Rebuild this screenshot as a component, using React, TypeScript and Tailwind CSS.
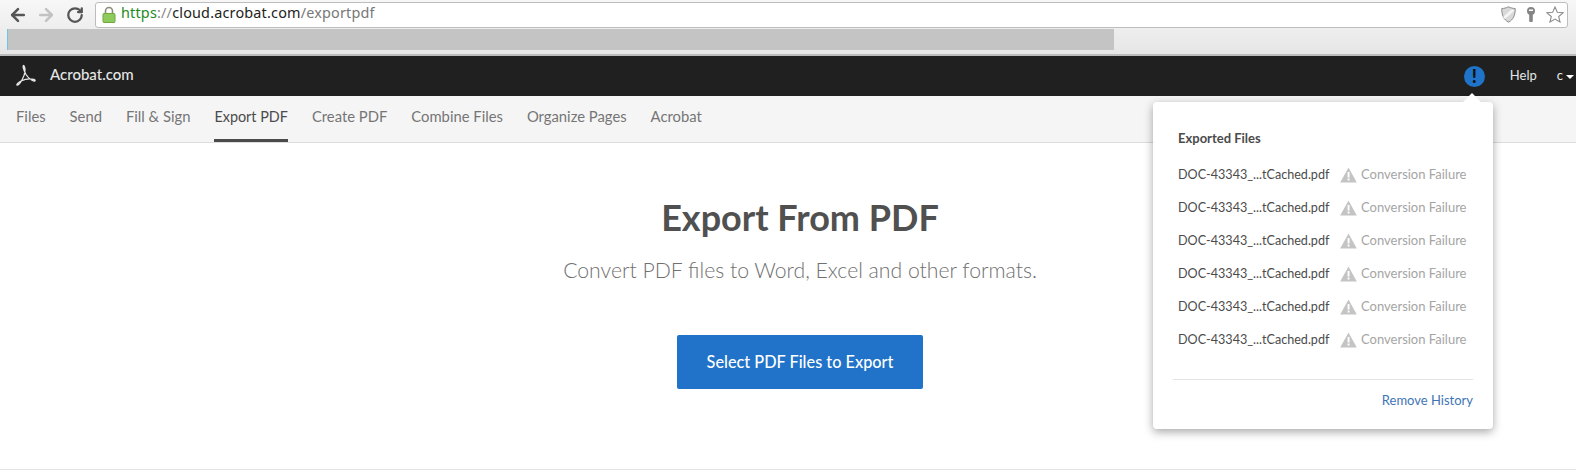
import { ArrowLeft, ArrowRight, RotateCw } from "lucide-react";

const tabs = ["Files", "Send", "Fill & Sign", "Export PDF", "Create PDF", "Combine Files", "Organize Pages", "Acrobat"];
const rows = [0, 1, 2, 3, 4, 5];

function AcrobatLogo() {
  return (
    <svg width="22" height="22" viewBox="0 0 22 22" fill="none" stroke="#e8e8e8" strokeWidth="1.3">
      <path d="M8.5 1.5c-1 .5 .2 5 2.5 9 2 3 5 6 8 6.5 1.5 .2 1.5-1.2 0-1.6-3-.8-9-.3-13 1.6-3 1.500-4.500 3.500-4 4 .8 .6 3-1.500 5-5 1.500-2.500 3-6 3-10 0-2.500-1-4.700-1.500-4.500z" />
    </svg>
  );
}

function WarningIcon() {
  return (
    <svg width="17" height="16" viewBox="0 0 17 16">
      <path d="M8.5 0.500 L16.800 15.500 H0.200 Z" fill="#c4c4c4" />
      <rect x="7.600" y="5" width="1.900" height="5.500" fill="#fff" />
      <rect x="7.600" y="11.500" width="1.900" height="2" fill="#fff" />
    </svg>
  );
}

function AddressBar() {
  return (
    <div className="flex h-[26px] flex-1 items-center rounded-[3px] border border-[#bdbdbd] bg-white pl-[6px] pr-[3px]">
      <svg width="14" height="17" viewBox="0 0 14 17" className="mr-[5px]">
        <path d="M3.500 8V5a3.500 3.500 0 0 1 7 0v3" fill="none" stroke="#8a8a7a" strokeWidth="1.600" />
        <rect x="1" y="7.500" width="12" height="9" rx="1" fill="#8ecb5c" stroke="#6da83f" />
      </svg>
      <span className="-mt-[2px] font-['Noto_Sans',sans-serif] text-[14.4px] leading-none tracking-[0.19px]">
        <span className="text-[#1d8a1d]">https</span>
        <span className="text-[#8a8a8a]">://</span>
        <span className="text-[#222]">cloud.acrobat.com</span>
        <span className="text-[#777]">/exportpdf</span>
      </span>
      <div className="ml-auto flex items-center gap-[10px]">
        <svg width="15" height="17" viewBox="0 0 15 17">
          <path d="M7.500 .800 C10 2 12 2.500 14.200 2.500 C14.500 9 12 14 7.500 16.200 C3 14 .5 9 .8 2.500 C3 2.500 5 2 7.500 .800 Z" fill="#d9d9d9" stroke="#8c8c8c" />
          <path d="M3 12 L12 4" stroke="#f5f5f5" strokeWidth="3" />
        </svg>
        <svg width="10" height="16" viewBox="0 0 10 16" fill="#858585">
          <circle cx="5" cy="4" r="4" />
          <rect x="3.200" y="5" width="3.600" height="10" rx="1" />
          <rect x="3" y="2.500" width="4" height="1.500" fill="#fff" />
        </svg>
        <svg width="18" height="17" viewBox="0 0 18 17" fill="#fff" stroke="#8d8d8d" strokeWidth="1.100">
          <path d="M9 1 L11.300 6.200 L17 6.800 L12.700 10.500 L14 16 L9 13.100 L4 16 L5.300 10.500 L1 6.800 L6.700 6.200 Z" />
        </svg>
      </div>
    </div>
  );
}

function ExportPopover() {
  return (
    <div className="absolute right-[83px] top-[102px] h-[327px] w-[340px] rounded-[4px] bg-white px-[20px] shadow-[0_3px_10px_rgba(0,0,0,0.35)]">
      <div className="absolute -top-[6px] right-[14px] size-[14px] rotate-45 bg-white" />
      <h3 className="pl-[5px] pt-[27px] text-[13px] font-bold leading-[18px] text-[#4b4b4b]">Exported Files</h3>
      <ul className="mt-[11px] flex flex-col">
        {rows.map((i) => (
          <li key={i} className="flex h-[33px] items-center pl-[5px] text-[13px]">
            <span className="mt-[2px] w-[162px] text-[12.6px] text-[#4b4b4b]">DOC-43343_...tCached.pdf</span>
            <WarningIcon />
            <span className="ml-[4px] text-[#a5a5a5]">Conversion Failure</span>
          </li>
        ))}
      </ul>
      <div className="mt-[23px] border-t border-[#e4e4e4] pt-[11px] text-right text-[13px] text-[#3f75b5]">Remove History</div>
    </div>
  );
}

export default function App() {
  return (
    <div className="relative flex h-[470px] flex-col overflow-hidden bg-white font-['Lato',sans-serif]">
      {/* browser chrome */}
      <div className="h-[56px] border-b-2 border-[#bcbcbc] bg-gradient-to-b from-[#f7f7f7] to-[#e6e6e6]">
        <div className="flex h-[28px] items-center pl-[8px] pr-[8px] pt-[1px]">
          <ArrowLeft size={20} strokeWidth={3} className="text-[#555]" />
          <ArrowRight size={20} strokeWidth={3} className="ml-[8px] text-[#c2c2c2]" />
          <RotateCw size={18} strokeWidth={3} className="ml-[10px] mr-[11px] text-[#555]" />
          <AddressBar />
        </div>
        <div className="ml-[7px] mt-[1px] h-[21px] w-[1107px] border-l border-[#6cc5e8] bg-[#c4c4c4]" />
      </div>

      {/* app header */}
      <div className="flex h-[40px] items-center bg-[#202020] text-[#e6e6e6]">
        <div className="-mt-[3px] ml-[15px]">
          <AcrobatLogo />
        </div>
        <span className="-mt-[4px] ml-[13px] text-[15px] font-medium">Acrobat.com</span>
        <div className="ml-auto flex items-center">
          <div className="flex size-[21px] items-center justify-center rounded-full bg-[#1f73c8] text-[18px] font-black leading-none text-[#111]">!</div>
          <span className="ml-[25px] text-[13px]">Help</span>
          <span className="ml-[20px] text-[13px]">c</span>
          <span className="ml-[3px] mr-[2px] mt-[2px] border-x-[4px] border-t-[4px] border-x-transparent border-t-white" />
        </div>
      </div>

      {/* tabs */}
      <nav className="flex h-[47px] gap-[24px] border-b border-[#dcdcdc] bg-[#f5f5f5] pl-[16px]">
        {tabs.map((tab) => (
          <a
            key={tab}
            className={
              tab === "Export PDF"
                ? "flex items-center border-b-[3px] border-[#4b4b4b] pb-[2px] text-[14.4px] text-[#4b4b4b]"
                : "flex items-center border-b-[3px] border-transparent pb-[2px] text-[14.8px] text-[#757575]"
            }
          >
            {tab}
          </a>
        ))}
      </nav>

      {/* main */}
      <main className="flex flex-1 flex-col items-center border-b border-[#e4e4e4] pl-[24px] pt-[52px]">
        <h1 className="text-[36px] font-bold leading-[44px] text-[#505050]">Export From PDF</h1>
        <p className="mt-[16px] text-[21.200px] font-light leading-[30px] text-[#707070]">Convert PDF files to Word, Excel and other formats.</p>
        <button className="mt-[50px] h-[54px] w-[246px] rounded-[2px] bg-[#2073c8] text-[16.300px] font-medium text-white">Select PDF Files to Export</button>
      </main>

      <ExportPopover />
    </div>
  );
}
